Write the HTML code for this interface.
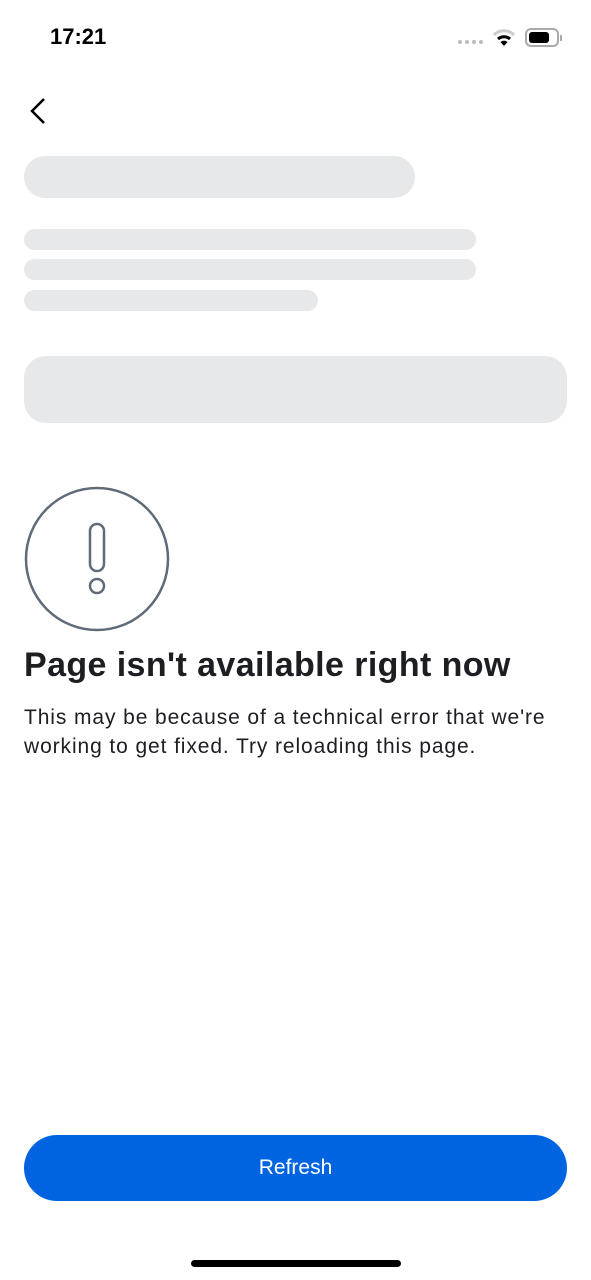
<!DOCTYPE html>
<html><head><meta charset="utf-8"><style>
*{margin:0;padding:0;box-sizing:border-box}
body{width:591px;height:1280px;background:#fff;position:relative;overflow:hidden;font-family:"Liberation Sans",sans-serif;color:#1c1e21}
.a{position:absolute}
.sk{position:absolute;background:#e7e8ea}
</style></head><body>
<div class="a" style="left:50px;top:24px;font-size:22px;font-weight:bold;color:#000">17:21</div>
<div class="a" style="left:458px;top:40px;display:flex;gap:3px">
<span style="width:4px;height:4px;border-radius:2px;background:#bbb"></span><span style="width:4px;height:4px;border-radius:2px;background:#bbb"></span><span style="width:4px;height:4px;border-radius:2px;background:#bbb"></span><span style="width:4px;height:4px;border-radius:2px;background:#bbb"></span></div>
<svg class="a" style="left:492px;top:28px" width="24" height="20" viewBox="0 0 24 20"><path d="M2 7 A14 14 0 0 1 22 7" stroke="#ccc" stroke-width="3" fill="none"/><path d="M6 11 A9 9 0 0 1 18 11" stroke="#000" stroke-width="3" fill="none"/><path d="M12 18 L8.5 14 A5 5 0 0 1 15.5 14 Z" fill="#000"/></svg>
<div class="a" style="left:525px;top:28px;width:34px;height:19px;border:2px solid #aaa;border-radius:6px"></div>
<div class="a" style="left:529px;top:32px;width:20px;height:11px;background:#000;border-radius:3px"></div>
<div class="a" style="left:560px;top:35px;width:2px;height:6px;background:#aaa"></div>
<svg class="a" style="left:26px;top:96px" width="24" height="30" viewBox="0 0 24 30"><path d="M18 3 L6 15 L18 27" stroke="#000" stroke-width="2.5" fill="none"/></svg>
<div class="sk" style="left:24px;top:156px;width:391px;height:42px;border-radius:21px"></div>
<div class="sk" style="left:24px;top:229px;width:452px;height:21px;border-radius:11px"></div>
<div class="sk" style="left:24px;top:259px;width:452px;height:21px;border-radius:11px"></div>
<div class="sk" style="left:24px;top:290px;width:294px;height:21px;border-radius:11px"></div>
<div class="sk" style="left:24px;top:356px;width:543px;height:67px;border-radius:22px"></div>
<svg class="a" style="left:23px;top:486px" width="148" height="148" viewBox="0 0 148 148"><circle cx="74" cy="73" r="71" stroke="#5f6b78" stroke-width="2.5" fill="none"/><rect x="67" y="38" width="14" height="47" rx="7" stroke="#5f6b78" stroke-width="2.5" fill="none"/><circle cx="74" cy="100" r="7" stroke="#5f6b78" stroke-width="2.5" fill="none"/></svg>
<div class="a" style="left:24px;top:646px;font-size:34px;font-weight:bold;letter-spacing:0.4px;white-space:nowrap">Page isn't available right now</div>
<div class="a" style="left:24px;top:703px;font-size:21px;line-height:29px;width:560px;letter-spacing:0.9px;white-space:nowrap">This may be because of a technical error that we're<br>working to get fixed. Try reloading this page.</div>
<div class="a" style="left:24px;top:1135px;width:543px;height:66px;border-radius:33px;background:#0064e0;color:#fff;font-size:21px;display:flex;align-items:center;justify-content:center">Refresh</div>
<div class="a" style="left:191px;top:1260px;width:210px;height:7px;border-radius:4px;background:#000"></div>
</body></html>
